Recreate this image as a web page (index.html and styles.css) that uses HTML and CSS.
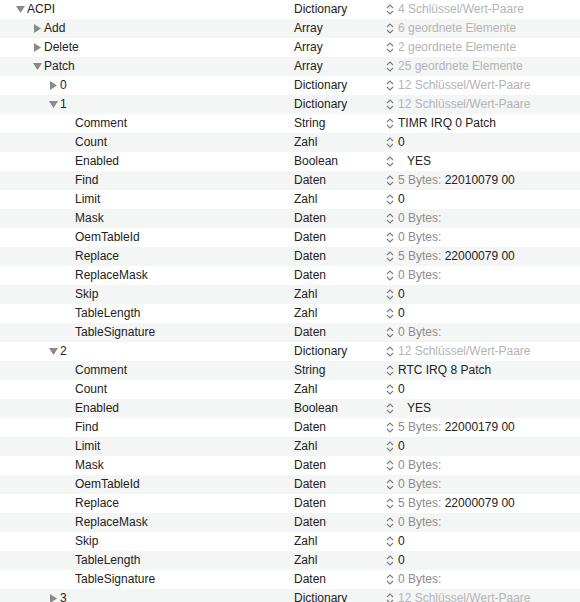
FILE: index.html
```html
<!DOCTYPE html>
<html>
<head>
<meta charset="utf-8">
<link rel="stylesheet" href="styles.css">
</head>
<body>
<div class="outline">
  <div class="row"><div class="key l0"><svg class="tri" viewBox="0 0 9 9"><polygon points="0,1 9,1 4.5,8"/></svg>ACPI</div><div class="type">Dictionary</div><div class="val"><svg class="step" viewBox="0 0 8 11"><polyline points="1,4 4,1 7,4"/><polyline points="1,7 4,10 7,7"/></svg><span class="dim">4 Schlüssel/Wert-Paare</span></div></div>
  <div class="row"><div class="key l1"><svg class="tri" viewBox="0 0 9 9"><polygon points="1,0 8,4.5 1,9"/></svg>Add</div><div class="type">Array</div><div class="val"><svg class="step" viewBox="0 0 8 11"><polyline points="1,4 4,1 7,4"/><polyline points="1,7 4,10 7,7"/></svg><span class="dim">6 geordnete Elemente</span></div></div>
  <div class="row"><div class="key l1"><svg class="tri" viewBox="0 0 9 9"><polygon points="1,0 8,4.5 1,9"/></svg>Delete</div><div class="type">Array</div><div class="val"><svg class="step" viewBox="0 0 8 11"><polyline points="1,4 4,1 7,4"/><polyline points="1,7 4,10 7,7"/></svg><span class="dim">2 geordnete Elemente</span></div></div>
  <div class="row"><div class="key l1"><svg class="tri" viewBox="0 0 9 9"><polygon points="0,1 9,1 4.5,8"/></svg>Patch</div><div class="type">Array</div><div class="val"><svg class="step" viewBox="0 0 8 11"><polyline points="1,4 4,1 7,4"/><polyline points="1,7 4,10 7,7"/></svg><span class="dim">25 geordnete Elemente</span></div></div>
  <div class="row"><div class="key l2"><svg class="tri" viewBox="0 0 9 9"><polygon points="1,0 8,4.5 1,9"/></svg>0</div><div class="type">Dictionary</div><div class="val"><svg class="step" viewBox="0 0 8 11"><polyline points="1,4 4,1 7,4"/><polyline points="1,7 4,10 7,7"/></svg><span class="dim">12 Schlüssel/Wert-Paare</span></div></div>
  <div class="row"><div class="key l2"><svg class="tri" viewBox="0 0 9 9"><polygon points="0,1 9,1 4.5,8"/></svg>1</div><div class="type">Dictionary</div><div class="val"><svg class="step" viewBox="0 0 8 11"><polyline points="1,4 4,1 7,4"/><polyline points="1,7 4,10 7,7"/></svg><span class="dim">12 Schlüssel/Wert-Paare</span></div></div>
  <div class="row"><div class="key l3">Comment</div><div class="type">String</div><div class="val"><svg class="step" viewBox="0 0 8 11"><polyline points="1,4 4,1 7,4"/><polyline points="1,7 4,10 7,7"/></svg>TIMR IRQ 0 Patch</div></div>
  <div class="row"><div class="key l3">Count</div><div class="type">Zahl</div><div class="val"><svg class="step" viewBox="0 0 8 11"><polyline points="1,4 4,1 7,4"/><polyline points="1,7 4,10 7,7"/></svg>0</div></div>
  <div class="row"><div class="key l3">Enabled</div><div class="type">Boolean</div><div class="val"><svg class="step" viewBox="0 0 8 11"><polyline points="1,4 4,1 7,4"/><polyline points="1,7 4,10 7,7"/></svg><span class="bool">YES</span></div></div>
  <div class="row"><div class="key l3">Find</div><div class="type">Daten</div><div class="val"><svg class="step" viewBox="0 0 8 11"><polyline points="1,4 4,1 7,4"/><polyline points="1,7 4,10 7,7"/></svg><span class="mid">5 Bytes:</span>&nbsp;22010079 00</div></div>
  <div class="row"><div class="key l3">Limit</div><div class="type">Zahl</div><div class="val"><svg class="step" viewBox="0 0 8 11"><polyline points="1,4 4,1 7,4"/><polyline points="1,7 4,10 7,7"/></svg>0</div></div>
  <div class="row"><div class="key l3">Mask</div><div class="type">Daten</div><div class="val"><svg class="step" viewBox="0 0 8 11"><polyline points="1,4 4,1 7,4"/><polyline points="1,7 4,10 7,7"/></svg><span class="mid">0 Bytes:</span></div></div>
  <div class="row"><div class="key l3">OemTableId</div><div class="type">Daten</div><div class="val"><svg class="step" viewBox="0 0 8 11"><polyline points="1,4 4,1 7,4"/><polyline points="1,7 4,10 7,7"/></svg><span class="mid">0 Bytes:</span></div></div>
  <div class="row"><div class="key l3">Replace</div><div class="type">Daten</div><div class="val"><svg class="step" viewBox="0 0 8 11"><polyline points="1,4 4,1 7,4"/><polyline points="1,7 4,10 7,7"/></svg><span class="mid">5 Bytes:</span>&nbsp;22000079 00</div></div>
  <div class="row"><div class="key l3">ReplaceMask</div><div class="type">Daten</div><div class="val"><svg class="step" viewBox="0 0 8 11"><polyline points="1,4 4,1 7,4"/><polyline points="1,7 4,10 7,7"/></svg><span class="mid">0 Bytes:</span></div></div>
  <div class="row"><div class="key l3">Skip</div><div class="type">Zahl</div><div class="val"><svg class="step" viewBox="0 0 8 11"><polyline points="1,4 4,1 7,4"/><polyline points="1,7 4,10 7,7"/></svg>0</div></div>
  <div class="row"><div class="key l3">TableLength</div><div class="type">Zahl</div><div class="val"><svg class="step" viewBox="0 0 8 11"><polyline points="1,4 4,1 7,4"/><polyline points="1,7 4,10 7,7"/></svg>0</div></div>
  <div class="row"><div class="key l3">TableSignature</div><div class="type">Daten</div><div class="val"><svg class="step" viewBox="0 0 8 11"><polyline points="1,4 4,1 7,4"/><polyline points="1,7 4,10 7,7"/></svg><span class="mid">0 Bytes:</span></div></div>
  <div class="row"><div class="key l2"><svg class="tri" viewBox="0 0 9 9"><polygon points="0,1 9,1 4.5,8"/></svg>2</div><div class="type">Dictionary</div><div class="val"><svg class="step" viewBox="0 0 8 11"><polyline points="1,4 4,1 7,4"/><polyline points="1,7 4,10 7,7"/></svg><span class="dim">12 Schlüssel/Wert-Paare</span></div></div>
  <div class="row"><div class="key l3">Comment</div><div class="type">String</div><div class="val"><svg class="step" viewBox="0 0 8 11"><polyline points="1,4 4,1 7,4"/><polyline points="1,7 4,10 7,7"/></svg>RTC IRQ 8 Patch</div></div>
  <div class="row"><div class="key l3">Count</div><div class="type">Zahl</div><div class="val"><svg class="step" viewBox="0 0 8 11"><polyline points="1,4 4,1 7,4"/><polyline points="1,7 4,10 7,7"/></svg>0</div></div>
  <div class="row"><div class="key l3">Enabled</div><div class="type">Boolean</div><div class="val"><svg class="step" viewBox="0 0 8 11"><polyline points="1,4 4,1 7,4"/><polyline points="1,7 4,10 7,7"/></svg><span class="bool">YES</span></div></div>
  <div class="row"><div class="key l3">Find</div><div class="type">Daten</div><div class="val"><svg class="step" viewBox="0 0 8 11"><polyline points="1,4 4,1 7,4"/><polyline points="1,7 4,10 7,7"/></svg><span class="mid">5 Bytes:</span>&nbsp;22000179 00</div></div>
  <div class="row"><div class="key l3">Limit</div><div class="type">Zahl</div><div class="val"><svg class="step" viewBox="0 0 8 11"><polyline points="1,4 4,1 7,4"/><polyline points="1,7 4,10 7,7"/></svg>0</div></div>
  <div class="row"><div class="key l3">Mask</div><div class="type">Daten</div><div class="val"><svg class="step" viewBox="0 0 8 11"><polyline points="1,4 4,1 7,4"/><polyline points="1,7 4,10 7,7"/></svg><span class="mid">0 Bytes:</span></div></div>
  <div class="row"><div class="key l3">OemTableId</div><div class="type">Daten</div><div class="val"><svg class="step" viewBox="0 0 8 11"><polyline points="1,4 4,1 7,4"/><polyline points="1,7 4,10 7,7"/></svg><span class="mid">0 Bytes:</span></div></div>
  <div class="row"><div class="key l3">Replace</div><div class="type">Daten</div><div class="val"><svg class="step" viewBox="0 0 8 11"><polyline points="1,4 4,1 7,4"/><polyline points="1,7 4,10 7,7"/></svg><span class="mid">5 Bytes:</span>&nbsp;22000079 00</div></div>
  <div class="row"><div class="key l3">ReplaceMask</div><div class="type">Daten</div><div class="val"><svg class="step" viewBox="0 0 8 11"><polyline points="1,4 4,1 7,4"/><polyline points="1,7 4,10 7,7"/></svg><span class="mid">0 Bytes:</span></div></div>
  <div class="row"><div class="key l3">Skip</div><div class="type">Zahl</div><div class="val"><svg class="step" viewBox="0 0 8 11"><polyline points="1,4 4,1 7,4"/><polyline points="1,7 4,10 7,7"/></svg>0</div></div>
  <div class="row"><div class="key l3">TableLength</div><div class="type">Zahl</div><div class="val"><svg class="step" viewBox="0 0 8 11"><polyline points="1,4 4,1 7,4"/><polyline points="1,7 4,10 7,7"/></svg>0</div></div>
  <div class="row"><div class="key l3">TableSignature</div><div class="type">Daten</div><div class="val"><svg class="step" viewBox="0 0 8 11"><polyline points="1,4 4,1 7,4"/><polyline points="1,7 4,10 7,7"/></svg><span class="mid">0 Bytes:</span></div></div>
  <div class="row"><div class="key l2"><svg class="tri" viewBox="0 0 9 9"><polygon points="1,0 8,4.5 1,9"/></svg>3</div><div class="type">Dictionary</div><div class="val"><svg class="step" viewBox="0 0 8 11"><polyline points="1,4 4,1 7,4"/><polyline points="1,7 4,10 7,7"/></svg><span class="dim">12 Schlüssel/Wert-Paare</span></div></div>
</div>
</body>
</html>
```

FILE: styles.css
```css
html, body {
  margin: 0;
  padding: 0;
  background: #ffffff;
  overflow: hidden;
}
body {
  width: 580px;
  height: 602px;
  font-family: "Liberation Sans", Arial, sans-serif;
  font-size: 12px;
  color: #222222;
}
.outline {
  display: flex;
  flex-direction: column;
}
.row {
  display: grid;
  grid-template-columns: 294px 91px 1fr;
  height: 19px;
  align-items: center;
}
.row:nth-child(even) {
  background: #f4f5f5;
}
.key, .type, .val {
  display: flex;
  align-items: center;
  height: 19px;
  line-height: 18px;
  padding-bottom: 1px;
  box-sizing: border-box;
  white-space: nowrap;
  overflow: hidden;
}
.l0 { padding-left: 16px; }
.l1 { padding-left: 33px; }
.l2 { padding-left: 49px; }
.l3 { padding-left: 75px; }
.tri {
  width: 9px;
  height: 9px;
  fill: #8a8a8a;
  margin-right: 2px;
  flex: none;
}
.step {
  width: 8px;
  height: 11px;
  margin-left: 1px;
  margin-right: 4px;
  flex: none;
  fill: none;
  stroke: #7a7a7a;
  stroke-width: 1.1;
}
.dim { color: #b4b4b4; }
.mid { color: #8c8c8c; }
.bool { padding-left: 9px; }
```
